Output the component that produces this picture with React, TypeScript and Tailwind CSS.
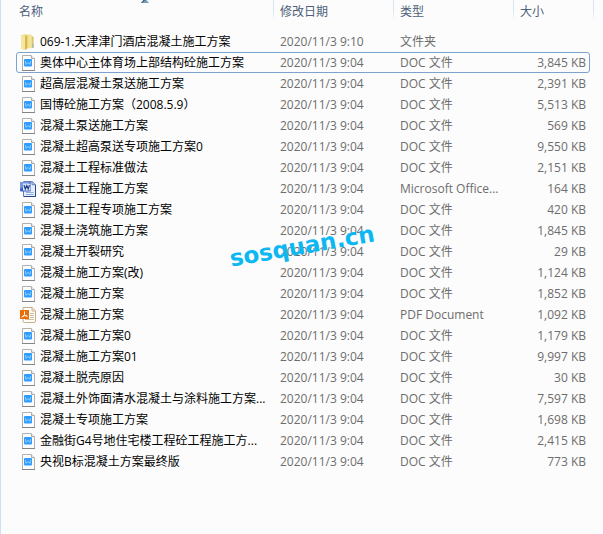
import React from "react";

type FileKind = "folder" | "doc" | "word" | "pdf";

interface FileRow {
  name: string;
  size: string;
  kind?: FileKind;
  type?: string;
  date?: string;
  selected?: boolean;
}

const files: FileRow[] = [
  { name: "069-1.天津津门酒店混凝土施工方案", size: "", kind: "folder", type: "文件夹", date: "2020/11/3 9:10" },
  { name: "奥体中心主体育场上部结构砼施工方案", size: "3,845 KB", selected: true },
  { name: "超高层混凝土泵送施工方案", size: "2,391 KB" },
  { name: "国博砼施工方案（2008.5.9）", size: "5,513 KB" },
  { name: "混凝土泵送施工方案", size: "569 KB" },
  { name: "混凝土超高泵送专项施工方案0", size: "9,550 KB" },
  { name: "混凝土工程标准做法", size: "2,151 KB" },
  { name: "混凝土工程施工方案", size: "164 KB", kind: "word", type: "Microsoft Office..." },
  { name: "混凝土工程专项施工方案", size: "420 KB" },
  { name: "混凝土浇筑施工方案", size: "1,845 KB" },
  { name: "混凝土开裂研究", size: "29 KB" },
  { name: "混凝土施工方案(改)", size: "1,124 KB" },
  { name: "混凝土施工方案", size: "1,852 KB" },
  { name: "混凝土施工方案", size: "1,092 KB", kind: "pdf", type: "PDF Document" },
  { name: "混凝土施工方案0", size: "1,179 KB" },
  { name: "混凝土施工方案01", size: "9,997 KB" },
  { name: "混凝土脱壳原因", size: "30 KB" },
  { name: "混凝土外饰面清水混凝土与涂料施工方案...", size: "7,597 KB" },
  { name: "混凝土专项施工方案", size: "1,698 KB" },
  { name: "金融街G4号地住宅楼工程砼工程施工方...", size: "2,415 KB" },
  { name: "央视B标混凝土方案最终版", size: "773 KB" },
];

const FolderIcon = () => (
  <svg className="block size-4" viewBox="0 0 16 16">
    <path d="M1 1 6 .3V14.5L5 16 1 14.6Z" fill="#e9d27c" />
    <path d="M1 1 5 1.8V16L1 14.6Z" fill="#f5e7a0" />
    <path d="M6 .5h5.5v13.7H6Z" fill="#f3e398" />
    <path d="M5 2.5 7.6 1v13.3L5 16Z" fill="#d6b850" />
    <path d="M11.5 2.5h2V14h-2Z" fill="#dcc063" />
    <path d="M7.6 1h3.9V14H7.6Z" fill="#f3e494" />
    <path d="M12.6 10h1v3.5h-1Z" fill="#7db9e0" />
  </svg>
);

const DocIcon = () => (
  <svg className="block size-4" viewBox="0 0 16 16">
    <path d="M2.5.5h8.5l3.5 3.5v11.5h-12Z" fill="#fdfdfd" stroke="#b0b0b0" />
    <path d="M2 15.5h13" stroke="#858585" />
    <path d="M11.5.5v3h3" fill="#e8e8e8" stroke="#a9a9a9" />
    <rect x="4" y="4" width="8" height="7.6" rx="1" fill="#2f9dff" />
    <path d="m5.4 6.2.7 3.2L8 7.4l1.9 2 .7-3.2" fill="none" stroke="#b5dcff" strokeWidth=".8" />
  </svg>
);

const WordIcon = () => (
  <svg className="block size-4" viewBox="0 0 16 16">
    <path d="M3.5.5h8.8l3.2 3v12h-12Z" fill="#e4edfb" stroke="#6280b8" />
    <path d="M15.5 4v11.5H4" fill="none" stroke="#28467f" />
    <path d="M12 .5v3.2h3.5" fill="#b9cdef" stroke="#6280b8" />
    <path d="M6 11.5h7.5M6 13.5h7.5" stroke="#93abd8" />
    <rect x="0" y="1" width="11" height="9.5" rx="1" fill="#3c62c4" />
    <path d="M0 2a1 1 0 0 1 1-1h9L0 8Z" fill="#7897e2" />
    <rect x="3" y="2.5" width="7.5" height="7" fill="#dfe8fb" />
    <path d="m4 4 1.3 4L6.8 4.5 8.2 8l1.3-4" fill="none" stroke="#24418f" strokeWidth="1.2" />
  </svg>
);

const PdfIcon = () => (
  <svg className="block size-4" viewBox="0 0 16 16">
    <path d="M3 .5h9.2l3.3 3.3V14q0 1.5-1.5 1.5H4.5Q3 15.5 3 14Z" fill="#fffdf8" stroke="#c5ad8b" />
    <path d="M12 .5V4h3.5" fill="#f2e8d8" stroke="#c5ad8b" />
    <path d="M10 6.5h4M10 8.5h4M10 10.5h4M5 12.5h9" stroke="#d1bfa4" />
    <rect x="0" y="3" width="9" height="9" fill="#ea6d05" />
    <path d="M4.5 4.3v3.2Q4 9.3 1.5 10.3M4.5 7.5Q5.5 9 7.7 9.4M2.7 9.2q2-.8 3.8-.5" fill="none" stroke="#fff" />
  </svg>
);

const icons: Record<FileKind, React.FC> = {
  folder: FolderIcon,
  doc: DocIcon,
  word: WordIcon,
  pdf: PdfIcon,
};

const Divider = ({ className = "-right-px" }: { className?: string }) => (
  <span className={`absolute top-0 h-5 w-px bg-linear-to-b from-[#d9e6f4] from-60% to-transparent ${className}`} />
);

const Row = ({ file }: { file: FileRow }) => {
  const Icon = icons[file.kind ?? "doc"];
  return (
    <tr className={file.selected ? "rounded-[3px] outline -outline-offset-1 outline-[#7da2ce]" : ""}>
      <td className="h-[21px] p-0 pl-1 text-black">
        <div className="flex items-center gap-1">
          <Icon />
          <span>{file.name}</span>
        </div>
      </td>
      <td className="p-0 pl-[7px]">{file.date ?? "2020/11/3 9:04"}</td>
      <td className="p-0 pl-[7px]">{file.type ?? "DOC 文件"}</td>
      <td className="p-0 pr-1 text-right">{file.size}</td>
    </tr>
  );
};

export default function App() {
  return (
    <main className="relative min-h-screen overflow-hidden border-l border-[#cfe0f3] bg-[#fcfcfc] pr-[13px] pl-[15px] font-['Open_Sans','Noto_Sans_CJK_SC',sans-serif] text-[12px] leading-5 text-[#6d6d6d]">
      <table className="w-full table-fixed border-collapse whitespace-nowrap">
        <colgroup>
          <col />
          <col className="w-[120px]" />
          <col className="w-[120px]" />
          <col className="w-[77px]" />
        </colgroup>
        <thead>
          <tr className="text-left text-[#4c607a]">
            <th className="relative h-[31px] p-0 pb-2 pl-[3px] font-normal">
              <button type="button">名称</button>
              <svg className="absolute top-0 left-1/2 h-[3px] w-2 -translate-x-1/2" viewBox="0 0 8 3">
                <path d="M2.5 0h3L8 3H0Z" fill="#74a3c0" />
                <path d="M2.5 0h2L1 3H0Z" fill="#3c5d72" />
              </svg>
              <Divider />
            </th>
            <th className="relative p-0 pb-2 pl-[7px] font-normal">
              <button type="button">修改日期</button>
              <Divider />
            </th>
            <th className="relative p-0 pb-2 pl-[7px] font-normal">
              <button type="button">类型</button>
              <Divider />
            </th>
            <th className="relative p-0 pb-2 pl-[7px] font-normal">
              <button type="button">大小</button>
              <Divider className="-right-1" />
            </th>
          </tr>
        </thead>
        <tbody>
          {files.map((file, i) => (
            <Row key={i} file={file} />
          ))}
        </tbody>
      </table>

      {/* Watermark over the list */}
      <div className="pointer-events-none absolute top-[232px] left-1/2 -translate-x-1/2 -rotate-10 font-['DejaVu_Sans'] text-[23px] leading-7 font-bold text-[#0cb8f2]">
        sosquan.cn
      </div>
    </main>
  );
}
